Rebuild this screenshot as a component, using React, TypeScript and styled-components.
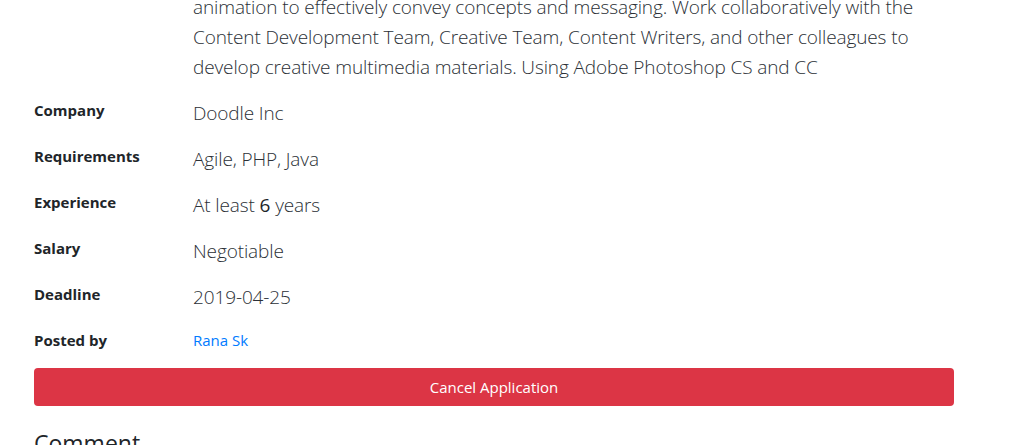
import React from "react";
import styled, { createGlobalStyle } from "styled-components";

const Global = createGlobalStyle`
  html, body { margin: 0; padding: 0; background: #fff; overflow: hidden; }
  body { font-family: "Open Sans", "Noto Sans", sans-serif; color: #212529; }
`;

const Page = styled.div`
  width: 920px;
  padding: 0 61px 0 34px;
  margin-top: -8px;
`;

const Details = styled.div`
  display: flex;
  flex-direction: column;
  gap: 16px;
`;

const Row = styled.div`
  display: grid;
  grid-template-columns: 159px 1fr;
  align-items: start;
`;

const Label = styled.div`
  font-size: 15px;
  line-height: 24px;
  font-weight: 700;
  color: #212529;
`;

const Value = styled.div`
  font-size: 19px;
  line-height: 30px;
  font-weight: 300;
  letter-spacing: -0.12px;
  color: #2b3036;
  white-space: nowrap;
`;

const Strong = styled.span`
  font-weight: 400;
  color: #212529;
`;

const Link = styled.a`
  font-size: 15px;
  line-height: 24px;
  color: #007bff;
  text-decoration: none;
`;

const CancelButton = styled.button`
  display: block;
  width: 920px;
  height: 38px;
  margin-top: 16px;
  border: none;
  border-radius: 4px;
  background: #dc3545;
  color: #fff;
  font-family: "Open Sans", "Noto Sans", sans-serif;
  font-size: 15px;
  cursor: pointer;
`;

const Heading = styled.h4`
  margin: 23px 0 0;
  font-size: 23px;
  line-height: 29px;
  font-weight: 500;
  color: #212529;
`;

const rows: { label: string; value: React.ReactNode }[] = [
  { label: "Company", value: "Doodle Inc" },
  { label: "Requirements", value: "Agile, PHP, Java" },
  {
    label: "Experience",
    value: (
      <>
        At least <Strong>6</Strong> years
      </>
    ),
  },
  { label: "Salary", value: "Negotiable" },
  { label: "Deadline", value: "2019-04-25" },
];

export default function App() {
  return (
    <>
      <Global />
      <Page>
        <Details>
          <Row>
            <Label />
            <Value>
              animation to effectively convey concepts and messaging. Work collaboratively with the
              <br />
              Content Development Team, Creative Team, Content Writers, and other colleagues to
              <br />
              develop creative multimedia materials. Using Adobe Photoshop CS and CC
            </Value>
          </Row>
          {rows.map((r) => (
            <Row key={r.label}>
              <Label>{r.label}</Label>
              <Value>{r.value}</Value>
            </Row>
          ))}
          <Row>
            <Label>Posted by</Label>
            <div>
              <Link href="#">Rana Sk</Link>
            </div>
          </Row>
        </Details>
        <CancelButton>Cancel Application</CancelButton>
        <Heading>Comment</Heading>
      </Page>
    </>
  );
}
